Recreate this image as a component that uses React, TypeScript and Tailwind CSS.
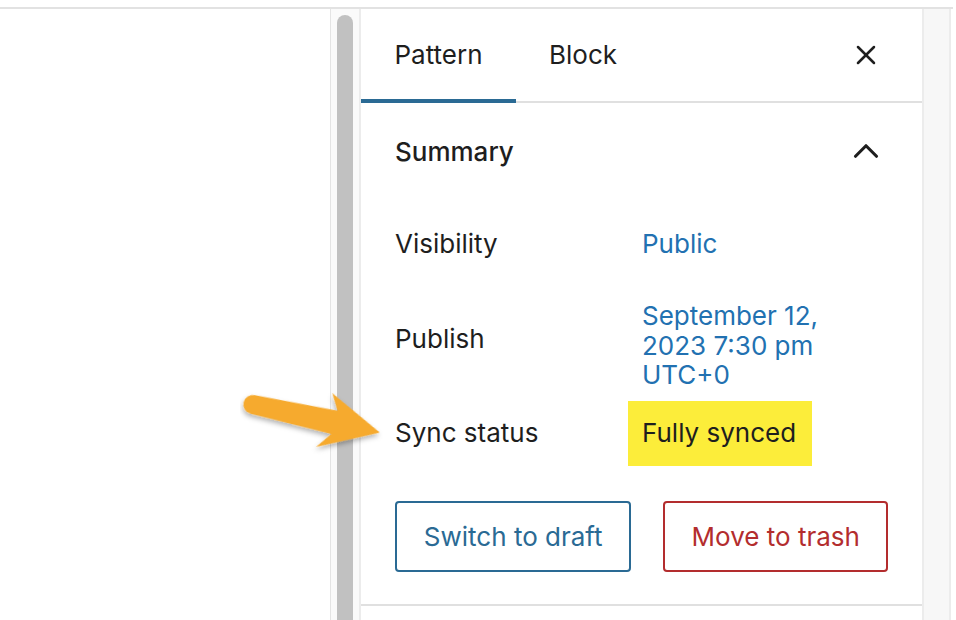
import { X, ChevronUp } from "lucide-react";

function Row({ label, children, className }: { label: string; children: React.ReactNode; className?: string }) {
  return (
    <div className={"flex items-center " + (className ?? "")}>
      <div className="w-[247px] shrink-0">{label}</div>
      <div className="flex-1">{children}</div>
    </div>
  );
}

function Arrow() {
  return (
    <svg className="absolute left-[240px] top-[370px]" width="150" height="95" viewBox="0 0 150 95">
      <defs>
        <filter id="shadow" x="-20%" y="-30%" width="140%" height="160%">
          <feDropShadow dx="0" dy="3" stdDeviation="2.5" floodColor="#000" floodOpacity="0.3" />
        </filter>
      </defs>
      <g transform="translate(13 34) rotate(12.7)" filter="url(#shadow)">
        <path
          d="M0,-9 L84,-12 L75,-28 L130,0 L71,28 L83,12 L0,10 A9.5,9.5 0 0 1 0,-9 Z"
          fill="#f6aa2e"
        />
      </g>
    </svg>
  );
}

export default function App() {
  return (
    <div
      className="relative w-[956px] h-[620px] overflow-hidden bg-white text-[#1e1e1e] flex flex-col"
      style={{ fontFamily: "Inter, 'Noto Sans', sans-serif" }}
    >
      <div className="h-[9px] shrink-0 border-b-2 border-[#e2e2e2] w-[953px]" />

      <div className="flex flex-1 min-h-0">
        {/* editor canvas */}
        <div className="w-[331px] shrink-0 border-r border-[#e4e4e4]" />

        {/* scrollbar */}
        <div className="w-[30px] shrink-0 border-r-2 border-[#ececec] bg-[#fafafa]">
          <div className="ml-[6px] mt-[6px] w-[16px] h-full rounded-t-full bg-[#c1c1c1]" />
        </div>

        {/* sidebar */}
        <div className="w-[561px] shrink-0 flex flex-col text-[26px] leading-[30px]">
          <div className="relative flex items-center h-[94px] border-b-2 border-[#e0e0e0] shrink-0">
            <div className="relative w-[155px] h-full flex items-center justify-center">
              Pattern
              <div className="absolute left-0 right-0 bottom-[-2px] h-[4px] bg-[#2a6a94]" />
            </div>
            <div className="w-[134px] h-full flex items-center justify-center">Block</div>
            <div className="flex-1" />
            <div className="w-[80px] flex items-center justify-center mr-[16px]">
              <X size={32} strokeWidth={1.9} color="#1e1e1e" />
            </div>
          </div>

          <div className="border-b-2 border-[#e0e0e0] pl-[34px] pr-[34px] pb-[32px]">
            <div className="flex items-center justify-between h-[97px]">
              <span className="font-medium">Summary</span>
              <ChevronUp size={42} strokeWidth={1.8} className="mr-[1px] -mt-[2px]" color="#1e1e1e" />
            </div>

            <Row label="Visibility" className="h-[88px]">
              <span className="text-[#2271b1]">Public</span>
            </Row>
            <div className="flex items-center h-[112px]">
              <div className="w-[247px] shrink-0 -mt-[10px]">Publish</div>
              <span className="block text-[#2271b1] leading-[29.5px] pt-[3px]">
                September 12,
                <br />
                2023 7:30 pm
                <br />
                UTC+0
              </span>
            </div>
            <div className="flex items-center h-[66px]">
              <div className="w-[233px] shrink-0">Sync status</div>
              <div className="h-[65px] w-[184px] flex items-center pl-[14px] bg-[#fced3a]">Fully synced</div>
            </div>

            <div className="flex gap-[32px] mt-[35px]">
              <button className="h-[71px] w-[238px] rounded-[4px] border-2 border-[#2a6a94] text-[#2a6a94]">
                Switch to draft
              </button>
              <button className="h-[71px] w-[226px] rounded-[4px] border-2 border-[#b32d2e] text-[#b32d2e]">
                Move to trash
              </button>
            </div>
          </div>
          <div className="flex-1" />
        </div>

        {/* right gutter */}
        <div className="w-[29px] shrink-0 border-l-2 border-r-2 border-[#ececec] bg-[#f7f7f7]" />
        <div className="flex-1" />
      </div>

      <Arrow />
    </div>
  );
}
